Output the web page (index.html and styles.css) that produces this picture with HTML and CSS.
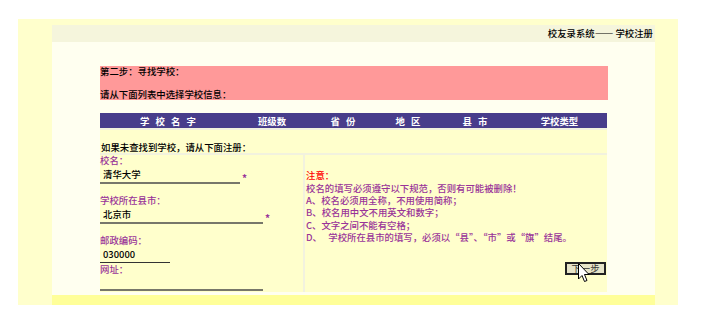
FILE: index.html
```html
<!DOCTYPE html>
<html lang="zh-CN">
<head>
  <meta charset="UTF-8">
  <title>校友录系统 - 学校注册</title>
  <link rel="stylesheet" href="styles.css">
</head>
<body>
  <div class="frame">
    <div class="page">
      <div class="top-bar">校友录系统—— 学校注册</div>
      <div class="content">
        <div class="step-box">
          <p>第二步：寻找学校：</p>
          <p>&nbsp;</p>
          <p>请从下面列表中选择学校信息：</p>
        </div>
        <div class="list-head">
          <span>学 校 名 字</span>
          <span>班级数</span>
          <span>省 份</span>
          <span>地 区</span>
          <span>县 市</span>
          <span>学校类型</span>
        </div>
        <div class="register">
          <div class="register-title">如果未查找到学校，请从下面注册：</div>
          <div class="form-col">
            <div class="label">校名：</div>
            <div class="field">
              <input type="text" class="input-line input-name" value="清华大学">
              <span class="star">*</span>
            </div>
            <div class="label label-gap">学校所在县市：</div>
            <div class="field">
              <input type="text" class="input-line input-city" value="北京市">
              <span class="star">*</span>
            </div>
            <div class="label label-gap">邮政编码：</div>
            <div class="field">
              <input type="text" class="input-line input-zip" value="030000">
            </div>
            <div class="label label-tight">网址：</div>
            <div class="field">
              <input type="text" class="input-line input-web" value="">
            </div>
          </div>
          <div class="rules-col">
            <p class="rules-title">注意：</p>
            <p>校名的填写必须遵守以下规范，否则有可能被删除！</p>
            <p>A、校名必须用全称，不用使用简称；</p>
            <p>B、校名用中文不用英文和数字；</p>
            <p>C、文字之间不能有空格；</p>
            <p>D、&nbsp;&nbsp; 学校所在县市的填写，必须以“县”、“市”或“旗”结尾。</p>
            <div class="button-row">
              <span class="button-wrap">
                <button class="button-next">下一步</button>
                <svg class="cursor" width="12" height="20" viewBox="0 0 12 20">
                  <polygon points="0.5,0.5 0.5,16 4,12.5 6.5,18.5 9,17.5 6.5,11.5 11,11.5" fill="#fff" stroke="#000" stroke-width="1"/>
                </svg>
              </span>
            </div>
          </div>
        </div>
      </div>
      <div class="footer-strip"></div>
    </div>
  </div>
</body>
</html>
```

FILE: styles.css
```css
:root {
  --color-frame: #FFFFCC;
  --color-page: #FFFFF0;
  --color-bar: #F5F5DC;
  --color-pink: #FF9999;
  --color-head: #483D8B;
  --color-cell: #FFFFCC;
  --color-grid: #F2F2DE;
  --color-purple: #993399;
  --color-strip: #FFFF99;
}
* {
  margin: 0;
  padding: 0;
  box-sizing: border-box;
}
body {
  background-color: #FFFFFF;
  font-family: "Noto Sans CJK SC", "Noto Sans", sans-serif;
  font-size: 9.4px;
  font-weight: 500;
  color: #000;
}
.frame {
  margin: 19px 0 0 18px;
  width: 660px;
  height: 286px;
  background-color: var(--color-frame);
  padding: 6px 23px 0 34px;
}
.page {
  height: 100%;
  background-color: var(--color-page);
  display: flex;
  flex-direction: column;
}
.top-bar {
  height: 17px;
  line-height: 17px;
  background-color: var(--color-bar);
  text-align: right;
  padding-right: 2px;
}
.content {
  flex: 1;
  padding: 24px 0 0 48px;
}
.step-box {
  width: 508px;
  background-color: var(--color-pink);
  line-height: 11.4px;
}
.list-head {
  margin-top: 13px;
  width: 507px;
  height: 15px;
  background-color: var(--color-head);
  color: #FFFFFF;
  font-weight: bold;
  display: grid;
  grid-template-columns: 136px 72px 70px 60px 74px 1fr;
  align-items: center;
  text-align: center;
  word-spacing: 4px;
}
.register {
  width: 507px;
  display: grid;
  grid-template-columns: 203px 1fr;
  gap: 2px;
  padding-top: 2px;
  background-color: var(--color-grid);
}
.register-title {
  grid-column: 1 / 3;
  height: 23px;
  padding: 12px 0 0 1px;
  line-height: 11px;
  background-color: var(--color-cell);
}
.form-col {
  height: 137px;
  background-color: var(--color-cell);
  color: var(--color-purple);
}
.label {
  line-height: 10px;
}
.label-gap {
  margin-top: 11px;
}
.label-tight {
  margin-top: 1px;
}
.field {
  display: flex;
  align-items: center;
}
.input-line {
  border: none;
  border-bottom: 2px solid #77776A;
  background: transparent;
  font-family: "Noto Sans CJK SC", "Noto Sans", sans-serif;
  font-size: 9.4px;
  font-weight: 500;
  color: #000;
  padding: 0 3px;
  outline: none;
}
.input-name {
  width: 140px;
  height: 19px;
}
.input-city {
  width: 163px;
  height: 19px;
}
.input-zip {
  width: 70px;
  height: 18px;
  border-bottom: 1px solid #333;
}
.input-web {
  width: 163px;
  height: 17px;
}
.star {
  margin: 7px 0 0 2px;
  font-size: 10px;
  line-height: 8px;
  font-weight: bold;
  color: var(--color-purple);
}
.rules-col {
  background-color: var(--color-cell);
  color: var(--color-purple);
  padding: 14px 1px 0 1px;
  line-height: 12.4px;
}
.rules-title {
  color: #FF0000;
}
.button-row {
  margin-top: 18px;
  display: flex;
  justify-content: flex-end;
}
.button-wrap {
  position: relative;
  display: inline-block;
}
.button-next {
  width: 41px;
  height: 13px;
  border: 2px solid #222;
  background-color: #E6E4C8;
  font-family: "Noto Sans CJK SC", "Noto Sans", sans-serif;
  font-size: 9.4px;
  line-height: 9px;
  color: #333;
}
.cursor {
  position: absolute;
  left: 13px;
  top: 1px;
}
.footer-strip {
  height: 10px;
  background-color: var(--color-strip);
}
```
